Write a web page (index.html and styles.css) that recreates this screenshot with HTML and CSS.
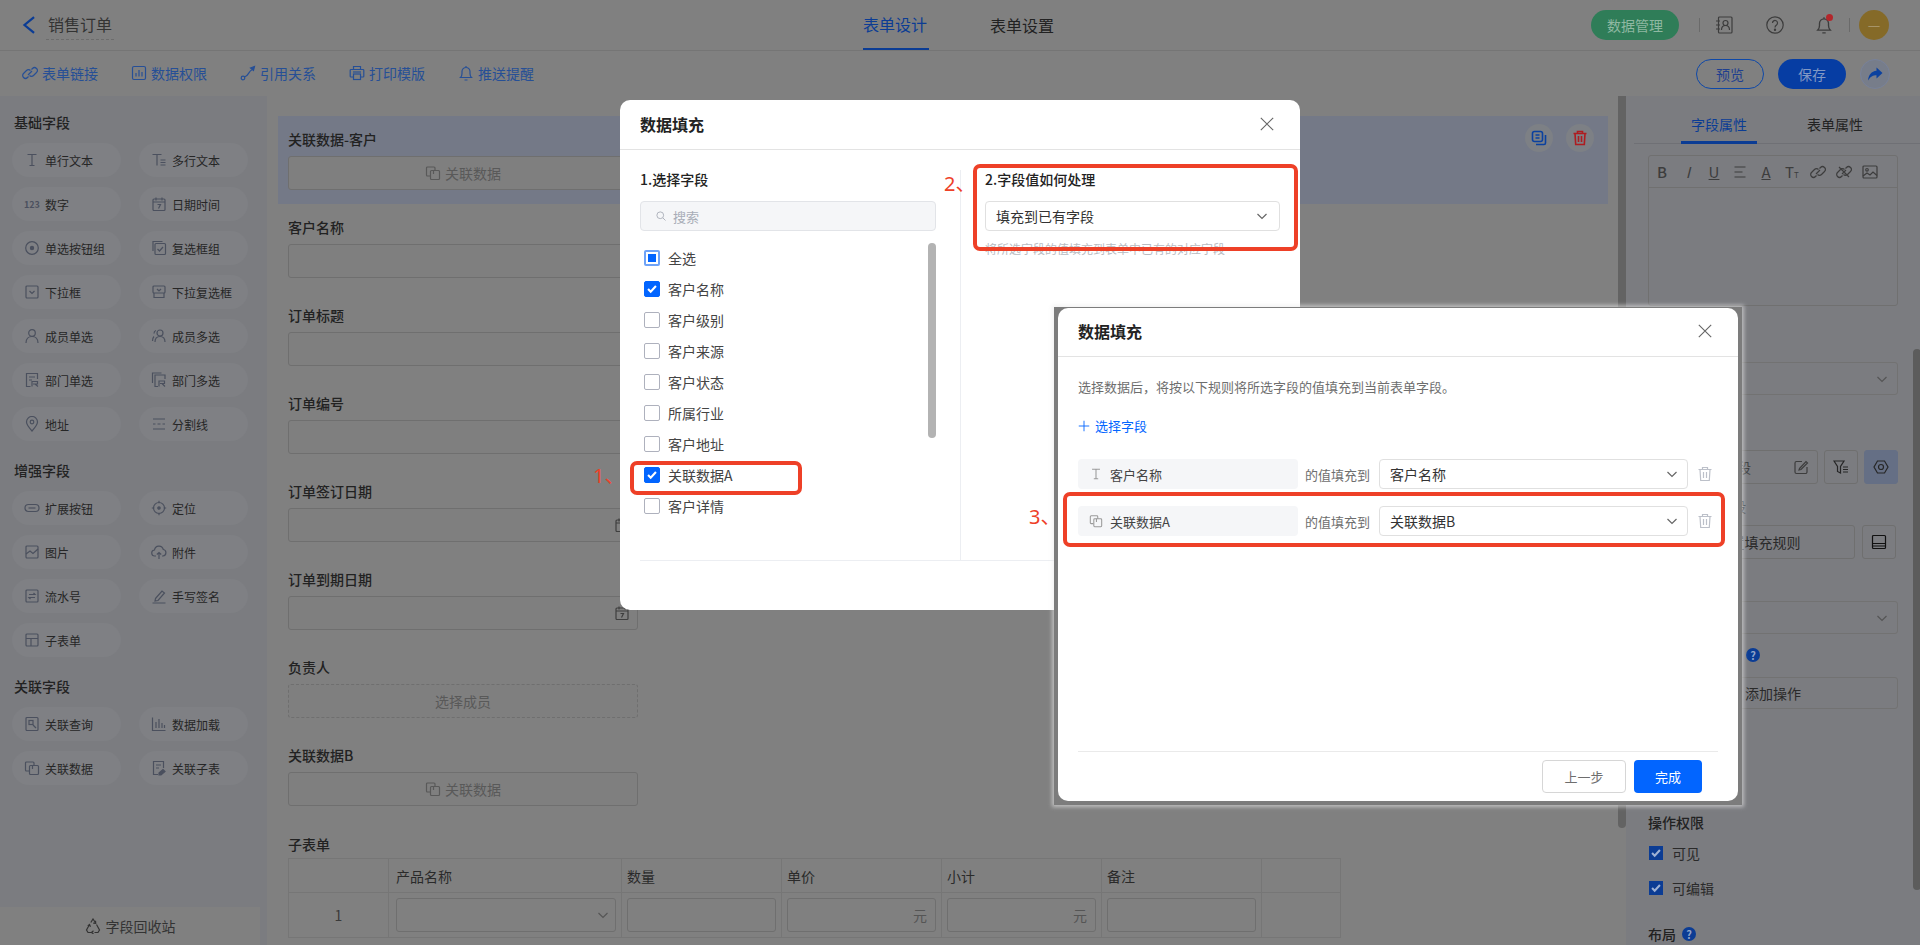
FILE: index.html
```html
<!DOCTYPE html>
<html lang="zh-CN">
<head>
  <meta charset="UTF-8" />
  <meta name="viewport" content="width=device-width, initial-scale=1.0" />
  <title>销售订单 - 表单设计</title>
  <link rel="stylesheet" href="styles.css">
</head>
<body>
  <svg class="sprite" xmlns="http://www.w3.org/2000/svg">
    <symbol id="i-chev" viewBox="0 0 16 16"><path d="M3.5 6l4.5 4.5L12.500 6"/></symbol>
    <symbol id="i-close" viewBox="0 0 16 16"><path d="M2.500 2.500l11 11M13.500 2.500l-11 11"/></symbol>
    <symbol id="i-text" viewBox="0 0 16 16"><path d="M3.500 2.500h9M8 2.500v11M5.500 13.500h5"/></symbol>
    <symbol id="i-mtext" viewBox="0 0 16 16"><path d="M1.500 2.500h9M6 2.500v11M9.500 8h5M9.500 10.500h5M9.500 13h5"/></symbol>
    <symbol id="i-date" viewBox="0 0 16 16"><rect x="2" y="3" width="12" height="11.500" rx="1"/><path d="M2 6h12M5 1.500v3M11 1.500v3M6.500 8.500h3L7.500 12.500"/></symbol>
    <symbol id="i-radio" viewBox="0 0 16 16"><circle cx="8" cy="8" r="6.300"/><circle cx="8" cy="8" r="1.600" class="solid"/></symbol>
    <symbol id="i-checks" viewBox="0 0 16 16"><path d="M2 11V1.500h9.500"/><rect x="4" y="3.500" width="10.500" height="11" rx="1"/><path d="M6.500 9l2 2 3.500-4"/></symbol>
    <symbol id="i-drop" viewBox="0 0 16 16"><rect x="2" y="2" width="12" height="12" rx="1"/><path d="M5.500 7l2.500 2.500L10.500 7"/></symbol>
    <symbol id="i-mdrop" viewBox="0 0 16 16"><rect x="2" y="2" width="12" height="7" rx="1"/><path d="M3 9v4.500h10V9M6 5l2 2 2-2"/></symbol>
    <symbol id="i-user" viewBox="0 0 16 16"><circle cx="8" cy="5" r="3.300"/><path d="M2 15c0-4 2.500-6.500 6-6.500s6 2.500 6 6.500"/></symbol>
    <symbol id="i-users" viewBox="0 0 16 16"><circle cx="9" cy="5" r="3"/><path d="M4 14c0-3.500 2-5.500 5-5.500s5 2 5 5.500M5 2.500C3.500 3 3 4 3 5.500M1.500 13c0-2 .5-3.500 1.500-4.500"/></symbol>
    <symbol id="i-dept" viewBox="0 0 16 16"><path d="M13.500 7V1.500h-11v13h4M5 5h6M5 8h3"/><path d="M8 14.500V9.500h5.500v2.500H9M11 12l3 2.500"/></symbol>
    <symbol id="i-depts" viewBox="0 0 16 16"><path d="M1.500 11V1h9"/><path d="M14 7V3H4v11.500h3M8 14.500V9h5.500v2.500H9M11 11.500l3 3"/></symbol>
    <symbol id="i-pin" viewBox="0 0 16 16"><path d="M8 15C4.500 11 2.500 8.500 2.500 6a5.500 5.500 0 0 1 11 0c0 2.500-2 5-5.500 9z"/><circle cx="8" cy="6" r="1.800"/></symbol>
    <symbol id="i-split" viewBox="0 0 16 16"><path d="M2 3h12M2 13h12M2 8h2.500M6.500 8h3M11.500 8H14"/></symbol>
    <symbol id="i-ext" viewBox="0 0 16 16"><rect x="1" y="4.500" width="14" height="7" rx="3.500"/><path d="M4.500 8h7"/></symbol>
    <symbol id="i-target" viewBox="0 0 16 16"><circle cx="8" cy="8" r="5.500"/><circle cx="8" cy="8" r="1.200" class="solid"/><path d="M8 .8v2.500M8 12.700v2.500M.8 8h2.500M12.700 8h2.500"/></symbol>
    <symbol id="i-pic" viewBox="0 0 16 16"><rect x="2" y="2" width="12" height="12" rx="1"/><path d="M2 10l4-3 3 2.500L14 5"/></symbol>
    <symbol id="i-cloud" viewBox="0 0 16 16"><path d="M5 12H4a3 3 0 0 1-.5-6 4.500 4.500 0 0 1 8.800-.5A3.300 3.300 0 0 1 12 12h-1M8 15V8.500M5.800 10.500L8 8.500l2.200 2"/></symbol>
    <symbol id="i-serial" viewBox="0 0 16 16"><rect x="2" y="2" width="12" height="12" rx="1"/><path d="M5 6.500h6L9.500 5M11 9.500H5L6.500 11"/></symbol>
    <symbol id="i-pen" viewBox="0 0 16 16"><path d="M4.500 10.500L11 3l2.500 2L7 12.500l-3 .5zM1.500 15h13"/></symbol>
    <symbol id="i-sub" viewBox="0 0 16 16"><rect x="2" y="2" width="12" height="12" rx="1"/><path d="M2 6.500h12M7 6.500V14"/></symbol>
    <symbol id="i-query" viewBox="0 0 16 16"><rect x="2" y="1.500" width="12" height="13" rx="1"/><rect x="5" y="4.500" width="4" height="4"/><path d="M9 9l3 3"/></symbol>
    <symbol id="i-bars" viewBox="0 0 16 16"><path d="M1.500 1.500v13h13M5 12V6M8 12V3M11 12V7M13.500 12V9"/></symbol>
    <symbol id="i-link" viewBox="0 0 16 16"><path d="M5 11H2.500a1 1 0 0 1-1-1V3a1 1 0 0 1 1-1H9a1 1 0 0 1 1 1v2.500"/><rect x="5.500" y="5.500" width="9" height="9" rx="1"/><path d="M8.500 5.500V9"/></symbol>
    <symbol id="i-rel" viewBox="0 0 16 16"><path d="M7 14.500H2.500v-13h10V8M5 5h5M5 8h3"/><path d="M8 13l4-3.500 2 2-4 3.500H8z" class="solid"/></symbol>
    <symbol id="i-chain" viewBox="0 0 16 16"><path d="M6.500 11.500l-1 1a2.800 2.800 0 0 1-4-4l3-3a2.800 2.800 0 0 1 4 0M9.500 4.500l1-1a2.800 2.800 0 0 1 4 4l-3 3a2.800 2.800 0 0 1-4 0M6 10l4-4"/></symbol>
    <symbol id="i-perm" viewBox="0 0 16 16"><rect x="1.500" y="1.500" width="13" height="13" rx="1.500"/><path d="M5 11.500V8M8 11.500V5M11 11.500V7"/></symbol>
    <symbol id="i-ref" viewBox="0 0 16 16"><circle cx="3" cy="13" r="1.800"/><path d="M4.500 12C9 11 8 6 12.500 4.500"/><path d="M10.500 3l4-1.500-1 4z" class="solid"/></symbol>
    <symbol id="i-print" viewBox="0 0 16 16"><path d="M4.500 4.500V1.500h7v3M4.500 12H2a.8.800 0 0 1-.8-.8V5.300a.8.800 0 0 1 .8-.8h12a.8.800 0 0 1 .8.800v5.900a.8.800 0 0 1-.8.800h-2.500"/><rect x="4.500" y="9" width="7" height="5.500"/><path d="M4 7h8"/></symbol>
    <symbol id="i-bell" viewBox="0 0 16 16"><path d="M2.500 12.500h11c-1-1-1.500-2-1.500-4V6.500a4 4 0 0 0-8 0v2c0 2-.5 3-1.500 4zM6.500 15h3M8 1v1.500"/></symbol>
    <symbol id="i-book" viewBox="0 0 18 18"><rect x="3.500" y="1" width="13.500" height="16" rx="1"/><circle cx="10.500" cy="7" r="2.500"/><path d="M6.500 14c0-3 1.500-4.500 4-4.500s4 1.500 4 4.500M1 5h4M1 9h4M1 13h4"/></symbol>
    <symbol id="i-help" viewBox="0 0 18 18"><circle cx="9" cy="9" r="8.200"/><path d="M6.500 7a2.500 2.500 0 1 1 4 2c-1 .7-1.500 1.200-1.500 2.500"/><circle cx="9" cy="13.800" r=".6" class="solid"/></symbol>
    <symbol id="i-share" viewBox="0 0 16 16"><path class="fill" d="M9.500 1.500L15.500 7l-6 5.500V9.200C6 9.200 3.500 10.500 1 14.500 1.500 9 4.500 5.200 9.500 4.800z"/></symbol>
    <symbol id="i-copy" viewBox="0 0 16 16"><rect x="1.500" y="1.500" width="10" height="10" rx="2"/><path d="M14.500 5v8a1.500 1.500 0 0 1-1.500 1.500H5M4.500 5h4M4.500 8h4"/></symbol>
    <symbol id="i-trash" viewBox="0 0 16 16"><path d="M1.500 3.500h13M5.500 3.500V1.500h5v2M3 3.500l.7 11h8.600l.7-11M6.500 6v6M9.500 6v6"/></symbol>
    <symbol id="i-recycle" viewBox="0 0 16 16"><path d="M5.800 4.500L8 1l2.300 3.500M11.500 6.500l3 5.500-1.500 2.500H9.500M6.500 14.500H3L1.500 12l3-5.500M10.500 2.800l.2 2.600-2.500-.3M8.500 12.800l-2 1.700 2 1.300M2.800 8l1.700-1.500 1 2.200"/></symbol>
    <symbol id="i-search" viewBox="0 0 16 16"><circle cx="7" cy="7" r="4.500"/><path d="M10.500 10.500l3.500 3.500"/></symbol>
    <symbol id="i-plus" viewBox="0 0 16 16"><path d="M8 1v14M1 8h14"/></symbol>
    <symbol id="i-check" viewBox="0 0 16 16"><path class="tick" d="M3.500 8l3 3 6-6.500"/></symbol>
    <symbol id="i-align" viewBox="0 0 16 16"><path d="M2.500 3h11M2.500 8h8M2.500 13h11"/></symbol>
    <symbol id="i-unlink" viewBox="0 0 16 16"><path d="M6.500 11.500l-1 1a2.800 2.800 0 0 1-4-4l3-3a2.800 2.800 0 0 1 4 0M9.500 4.500l1-1a2.800 2.800 0 0 1 4 4l-3 3a2.800 2.800 0 0 1-4 0M6 10l4-4M3 3l10 10"/></symbol>
    <symbol id="i-photo" viewBox="0 0 16 16"><rect x="1" y="2" width="14" height="12" rx="1"/><circle cx="5" cy="5.800" r="1.300"/><path d="M1 12l4-3 3 2 3-3 4 3.500"/></symbol>
    <symbol id="i-edit" viewBox="0 0 16 16"><path d="M14 8v5a1.500 1.500 0 0 1-1.500 1.500h-9A1.500 1.500 0 0 1 2 13V4a1.500 1.500 0 0 1 1.500-1.500H9"/><path d="M6.500 9.500L13 2.500l1.500 1.500-6.500 6.500-2 .5z"/></symbol>
    <symbol id="i-filter" viewBox="0 0 16 16"><path d="M1 2h10L7.500 7.500V14l-3-1.500v-5zM10 8h5M10 10.500h5M10 13h5"/></symbol>
    <symbol id="i-hex" viewBox="0 0 16 16"><path d="M4.500 2h7L15 8l-3.500 6h-7L1 8z"/><circle cx="8" cy="8" r="2.500"/></symbol>
    <symbol id="i-panel" viewBox="0 0 16 16"><rect x="1.500" y="1.500" width="13" height="13" rx="1"/><path d="M1.500 9.500h13M1.500 12h13"/></symbol>
  </svg>

  <header class="topbar">
    <div class="top-left">
      <svg class="back" viewBox="0 0 12 16"><path d="M10.500 1L2 8l8.500 7"/></svg>
      <span class="form-name">销售订单</span>
    </div>
    <nav class="top-tabs">
      <span class="top-tab on">表单设计</span>
      <span class="top-tab">表单设置</span>
    </nav>
    <div class="top-right">
      <span class="pill-green">数据管理</span>
      <i class="vline"></i>
      <svg class="ic top-ic"><use href="#i-book"/></svg>
      <svg class="ic top-ic"><use href="#i-help"/></svg>
      <span class="bell"><svg class="ic top-ic"><use href="#i-bell"/></svg><i class="dot"></i></span>
      <i class="vline"></i>
      <span class="avatar">—</span>
    </div>
  </header>

  <div class="toolbar">
    <a class="tool"><svg class="ic"><use href="#i-chain"/></svg>表单链接</a>
    <a class="tool"><svg class="ic"><use href="#i-perm"/></svg>数据权限</a>
    <a class="tool"><svg class="ic"><use href="#i-ref"/></svg>引用关系</a>
    <a class="tool"><svg class="ic"><use href="#i-print"/></svg>打印模版</a>
    <a class="tool"><svg class="ic"><use href="#i-bell"/></svg>推送提醒</a>
    <div class="tool-actions">
      <button class="btn-line">预览</button>
      <button class="btn-solid">保存</button>
      <span class="share"><svg class="ic"><use href="#i-share"/></svg></span>
    </div>
  </div>

  <main class="main">
    <aside class="sidebar">
      <h4 class="side-title">基础字段</h4>
      <div class="chips">
        <div class="chip"><svg class="ic"><use href="#i-text"/></svg>单行文本</div>
        <div class="chip"><svg class="ic"><use href="#i-mtext"/></svg>多行文本</div>
        <div class="chip"><span class="num-ic">123</span>数字</div>
        <div class="chip"><svg class="ic"><use href="#i-date"/></svg>日期时间</div>
        <div class="chip"><svg class="ic"><use href="#i-radio"/></svg>单选按钮组</div>
        <div class="chip"><svg class="ic"><use href="#i-checks"/></svg>复选框组</div>
        <div class="chip"><svg class="ic"><use href="#i-drop"/></svg>下拉框</div>
        <div class="chip"><svg class="ic"><use href="#i-mdrop"/></svg>下拉复选框</div>
        <div class="chip"><svg class="ic"><use href="#i-user"/></svg>成员单选</div>
        <div class="chip"><svg class="ic"><use href="#i-users"/></svg>成员多选</div>
        <div class="chip"><svg class="ic"><use href="#i-dept"/></svg>部门单选</div>
        <div class="chip"><svg class="ic"><use href="#i-depts"/></svg>部门多选</div>
        <div class="chip"><svg class="ic"><use href="#i-pin"/></svg>地址</div>
        <div class="chip"><svg class="ic"><use href="#i-split"/></svg>分割线</div>
      </div>
      <h4 class="side-title">增强字段</h4>
      <div class="chips">
        <div class="chip"><svg class="ic"><use href="#i-ext"/></svg>扩展按钮</div>
        <div class="chip"><svg class="ic"><use href="#i-target"/></svg>定位</div>
        <div class="chip"><svg class="ic"><use href="#i-pic"/></svg>图片</div>
        <div class="chip"><svg class="ic"><use href="#i-cloud"/></svg>附件</div>
        <div class="chip"><svg class="ic"><use href="#i-serial"/></svg>流水号</div>
        <div class="chip"><svg class="ic"><use href="#i-pen"/></svg>手写签名</div>
        <div class="chip"><svg class="ic"><use href="#i-sub"/></svg>子表单</div>
      </div>
      <h4 class="side-title">关联字段</h4>
      <div class="chips">
        <div class="chip"><svg class="ic"><use href="#i-query"/></svg>关联查询</div>
        <div class="chip"><svg class="ic"><use href="#i-bars"/></svg>数据加载</div>
        <div class="chip"><svg class="ic"><use href="#i-link"/></svg>关联数据</div>
        <div class="chip"><svg class="ic"><use href="#i-rel"/></svg>关联子表</div>
      </div>
      <div class="recycle"><svg class="ic"><use href="#i-recycle"/></svg>字段回收站</div>
    </aside>

    <section class="canvas">
      <div class="field field-on">
        <label class="f-label">关联数据-客户</label>
        <div class="f-box f-center"><svg class="ic"><use href="#i-link"/></svg>关联数据</div>
        <div class="field-ops">
          <span class="op op-copy"><svg class="ic"><use href="#i-copy"/></svg></span>
          <span class="op op-del"><svg class="ic"><use href="#i-trash"/></svg></span>
        </div>
      </div>
      <div class="field"><label class="f-label">客户名称</label><div class="f-box"></div></div>
      <div class="field"><label class="f-label">订单标题</label><div class="f-box"></div></div>
      <div class="field"><label class="f-label">订单编号</label><div class="f-box"></div></div>
      <div class="field"><label class="f-label">订单签订日期</label><div class="f-box f-date"><svg class="ic"><use href="#i-date"/></svg></div></div>
      <div class="field"><label class="f-label">订单到期日期</label><div class="f-box f-date"><svg class="ic"><use href="#i-date"/></svg></div></div>
      <div class="field"><label class="f-label">负责人</label><div class="f-box f-center f-dash">选择成员</div></div>
      <div class="field"><label class="f-label">关联数据B</label><div class="f-box f-center"><svg class="ic"><use href="#i-link"/></svg>关联数据</div></div>
      <div class="subform">
        <label class="f-label">子表单</label>
        <table class="sub-table">
          <colgroup>
            <col class="c-no"><col class="c-name"><col class="c-cell"><col class="c-cell"><col class="c-cell"><col class="c-cell"><col class="c-end">
          </colgroup>
          <tr class="sub-head"><th></th><th>产品名称</th><th>数量</th><th>单价</th><th>小计</th><th>备注</th><th></th></tr>
          <tr>
            <td class="no">1</td>
            <td><div class="cell-box cell-sel"><svg class="ic"><use href="#i-chev"/></svg></div></td>
            <td><div class="cell-box"></div></td>
            <td><div class="cell-box cell-unit">元</div></td>
            <td><div class="cell-box cell-unit">元</div></td>
            <td><div class="cell-box"></div></td>
            <td></td>
          </tr>
        </table>
      </div>
    </section>

    <div class="mid-scroll"><i></i></div>

    <aside class="panel">
      <div class="panel-tabs">
        <span class="panel-tab on">字段属性</span>
        <span class="panel-tab">表单属性</span>
      </div>
      <div class="panel-body">
        <div class="editor">
          <div class="editor-bar">
            <span class="eb"><b>B</b></span>
            <span class="eb"><i>I</i></span>
            <span class="eb"><u>U</u></span>
            <span class="eb"><svg class="ic"><use href="#i-align"/></svg></span>
            <span class="eb"><u>A</u></span>
            <span class="eb"><span>T<small>T</small></span></span>
            <span class="eb"><svg class="ic"><use href="#i-chain"/></svg></span>
            <span class="eb"><svg class="ic"><use href="#i-unlink"/></svg></span>
            <span class="eb"><svg class="ic"><use href="#i-photo"/></svg></span>
          </div>
        </div>

        <div class="p-select p-select-a"><svg class="ic"><use href="#i-chev"/></svg></div>

        <div class="p-row p-row-a">
          <div class="p-input p-input-a">选择填充字段<svg class="ic"><use href="#i-edit"/></svg></div>
          <span class="p-btn"><svg class="ic"><use href="#i-filter"/></svg></span>
          <span class="p-btn p-btn-on"><svg class="ic"><use href="#i-hex"/></svg></span>
        </div>

        <div class="p-label p-label-a">关联填充的字段</div>
        <div class="p-row p-row-b">
          <div class="p-input p-input-b"><svg class="ic"><use href="#i-plus"/></svg>配置填充规则</div>
          <span class="p-btn p-btn-dark"><svg class="ic"><use href="#i-panel"/></svg></span>
        </div>

        <div class="p-select p-select-b"><svg class="ic"><use href="#i-chev"/></svg></div>

        <div class="p-label p-label-b">字段操作按钮<span class="q">?</span></div>
        <div class="p-add"><svg class="ic"><use href="#i-plus"/></svg>添加操作</div>

        <h4 class="p-title p-title-a">操作权限</h4>
        <div class="p-check p-check-a"><span class="p-box"><svg class="ic"><use href="#i-check"/></svg></span>可见</div>
        <div class="p-check p-check-b"><span class="p-box"><svg class="ic"><use href="#i-check"/></svg></span>可编辑</div>
        <h4 class="p-title p-title-b">布局<span class="q">?</span></h4>
      </div>
      <i class="panel-scroll"></i>
    </aside>
  </main>

  <!-- 第一张弹窗：选择字段 -->
  <div class="dialog dialog-one">
    <div class="dlg-head"><span>数据填充</span><svg class="ic"><use href="#i-close"/></svg></div>
    <div class="dlg-cols">
      <div class="col-left">
        <h5 class="col-title">1.选择字段</h5>
        <div class="search"><svg class="ic"><use href="#i-search"/></svg>搜索</div>
        <ul class="pick-list">
          <li><span class="cb cb-part"></span>全选</li>
          <li><span class="cb cb-on"><svg class="ic"><use href="#i-check"/></svg></span>客户名称</li>
          <li><span class="cb"></span>客户级别</li>
          <li><span class="cb"></span>客户来源</li>
          <li><span class="cb"></span>客户状态</li>
          <li><span class="cb"></span>所属行业</li>
          <li><span class="cb"></span>客户地址</li>
          <li><span class="cb cb-on"><svg class="ic"><use href="#i-check"/></svg></span>关联数据A</li>
          <li><span class="cb"></span>客户详情</li>
          <i class="pick-thumb"></i>
        </ul>
      </div>
      <div class="col-right">
        <h5 class="col-title">2.字段值如何处理</h5>
        <div class="dlg-select dlg-select-wide">填充到已有字段<svg class="ic"><use href="#i-chev"/></svg></div>
        <p class="hint">将所选字段的值填充到表单中已有的对应字段</p>
      </div>
    </div>
  </div>

  <!-- 第二张弹窗：贴上去的截图，四周带浅色描边 -->
  <div class="shot">
    <div class="dialog dialog-two">
      <div class="dlg-head"><span>数据填充</span><svg class="ic"><use href="#i-close"/></svg></div>
      <div class="two-body">
        <p class="note">选择数据后，将按以下规则将所选字段的值填充到当前表单字段。</p>
        <a class="add-link"><svg class="ic"><use href="#i-plus"/></svg>选择字段</a>
        <div class="map-row">
          <div class="map-name"><svg class="ic"><use href="#i-text"/></svg>客户名称</div>
          <span class="map-to">的值填充到</span>
          <div class="dlg-select map-sel">客户名称<svg class="ic"><use href="#i-chev"/></svg></div>
          <svg class="ic map-del"><use href="#i-trash"/></svg>
        </div>
        <div class="map-row">
          <div class="map-name"><svg class="ic"><use href="#i-link"/></svg>关联数据A</div>
          <span class="map-to">的值填充到</span>
          <div class="dlg-select map-sel">关联数据B<svg class="ic"><use href="#i-chev"/></svg></div>
          <svg class="ic map-del"><use href="#i-trash"/></svg>
        </div>
        <div class="two-foot">
          <button class="foot-prev">上一步</button>
          <button class="foot-done">完成</button>
        </div>
      </div>
    </div>
  </div>

  <!-- 红色标注 -->
  <i class="mark-box mark-box-1"></i>
  <i class="mark-box mark-box-2"></i>
  <i class="mark-box mark-box-3"></i>
  <span class="mark-no mark-no-1">1、</span>
  <span class="mark-no mark-no-2">2、</span>
  <span class="mark-no mark-no-3">3、</span>
</body>
</html>
```

FILE: styles.css
```css
* {
  box-sizing: border-box;
}
body {
  margin: 0;
  width: 1920px;
  height: 945px;
  overflow: hidden;
  position: relative;
  background-color: #808080;
  color: #1f1f1f;
  font-family: "Noto Sans CJK SC", "Noto Sans", sans-serif;
  font-size: 14px;
}
h4, h5, p, ul {
  margin: 0;
  padding: 0;
}
.sprite {
  display: none;
}
.ic {
  width: 16px;
  height: 16px;
  flex: none;
  fill: none;
  stroke: currentColor;
  stroke-width: 1.200;
}
symbol .solid, .solid {
  fill: currentColor;
}
.fill {
  fill: currentColor;
  stroke: none;
}
.tick {
  stroke: #fff;
  stroke-width: 2.400;
}

/* top bar */
.topbar {
  height: 51px;
  display: flex;
  align-items: center;
  border-bottom: 1px solid #757575;
}
.top-left {
  flex: 0 0 863px;
  display: flex;
  align-items: center;
  padding-left: 22px;
}
.back {
  width: 14px;
  height: 18px;
  fill: none;
  stroke: #0b3c94;
  stroke-width: 2;
}
.form-name {
  margin-left: 10px;
  padding: 0 2px 2px;
  font-size: 16px;
  line-height: 26px;
  color: #333;
  border-bottom: 1px dashed #6c6c6c;
}
.top-tabs {
  display: flex;
  gap: 61px;
  height: 50px;
}
.top-tab {
  font-size: 16px;
  line-height: 50px;
  height: 50px;
  width: 66px;
  color: #222;
  white-space: nowrap;
}
.top-tab.on {
  color: #0b3c94;
  border-bottom: 2px solid #0b3c94;
  line-height: 48px;
}
.top-right {
  margin-left: auto;
  padding-right: 31px;
  display: flex;
  align-items: center;
}
.pill-green {
  width: 88px;
  height: 30px;
  line-height: 30px;
  text-align: center;
  border-radius: 15px;
  background-color: #2f7d58;
  color: #8fb8a2;
}
.vline {
  width: 1px;
  height: 14px;
  background-color: #6a6a6a;
  margin: 0 10px 0 20px;
}
.top-ic {
  width: 18px;
  height: 18px;
  color: #3c3c3c;
  margin: 0 0 0 5px;
}
.top-ic + .top-ic {
  margin-left: 33px;
}
.bell {
  position: relative;
  margin-left: 31px;
  display: flex;
}
.bell .top-ic {
  margin: 0;
}
.dot {
  position: absolute;
  right: 0;
  top: -2px;
  width: 7px;
  height: 7px;
  border-radius: 50%;
  background-color: #b3262b;
}
.bell + .vline {
  margin: 0 9px 0 16px;
}
.avatar {
  width: 30px;
  height: 30px;
  line-height: 28px;
  text-align: center;
  border-radius: 50%;
  background-color: #856a28;
  color: #a79468;
}

/* second bar */
.toolbar {
  height: 45px;
  display: flex;
  align-items: center;
  padding: 0 30px 0 22px;
  gap: 33px;
}
.tool {
  display: flex;
  align-items: center;
  gap: 4px;
  height: 22px;
  line-height: 20px;
  padding-bottom: 2px;
  color: #264f96;
  white-space: nowrap;
}
.tool .ic {
  width: 16px;
  height: 16px;
}
.tool-actions {
  margin-left: auto;
  display: flex;
  align-items: center;
  gap: 14px;
}
.btn-line, .btn-solid {
  width: 68px;
  height: 30px;
  border-radius: 15px;
  font: inherit;
  padding: 0;
}
.btn-line {
  background: transparent;
  border: 1px solid #0e48a8;
  color: #1f3f8f;
}
.btn-solid {
  border: none;
  background-color: #063da3;
  color: #8298c4;
}
.share {
  width: 30px;
  height: 30px;
  display: flex;
  align-items: center;
  justify-content: center;
  border-radius: 50%;
  background-color: #777d8a;
  border: 1px solid #78829a;
  color: #0b419f;
}

/* layout */
.main {
  display: flex;
  height: 849px;
}
.sidebar {
  flex: 0 0 267px;
  display: flex;
  flex-direction: column;
  padding: 17px 7px 0 12px;
  background-color: #7b7c80;
}
.side-title {
  font-size: 14px;
  font-weight: 500;
  line-height: 18px;
  padding: 0 0 2px 2px;
  margin-bottom: 10px;
  color: #222;
}
.chips {
  display: grid;
  grid-template-columns: 109px 109px;
  column-gap: 18px;
  row-gap: 10px;
  margin-bottom: 20px;
}
.chip {
  height: 34px;
  display: flex;
  align-items: center;
  gap: 5px;
  padding-left: 12px;
  border-radius: 17px;
  background-color: #7f8084;
  font-size: 12px;
  color: #262626;
  white-space: nowrap;
}
.chip .ic {
  color: #4b505e;
}
.num-ic {
  width: 16px;
  font-size: 9px;
  font-weight: 700;
  color: #4b505e;
}
.recycle {
  margin: auto 0 0 -12px;
  width: 260px;
  height: 38px;
  flex: none;
  display: flex;
  align-items: center;
  justify-content: center;
  gap: 5px;
  background-color: #808080;
  color: #333;
}

/* form canvas */
.canvas {
  flex: 0 0 1351px;
  padding-top: 20px;
}
.field {
  position: relative;
  height: 88px;
  padding: 14px 21px;
}
.field-on {
  margin: 0 10px 0 11px;
  padding: 14px 10px;
  background-color: #747987;
}
.f-label {
  display: block;
  height: 20px;
  line-height: 18px;
  font-weight: 500;
  color: #222;
  white-space: nowrap;
}
.f-box {
  width: 350px;
  height: 34px;
  margin-top: 6px;
  border: 1px solid #6f6f6f;
  border-radius: 3px;
  background-color: #7f7f7f;
}
.f-center {
  display: flex;
  align-items: center;
  justify-content: center;
  gap: 4px;
  color: #595959;
}
.f-dash {
  border-style: dashed;
}
.f-date {
  display: flex;
  align-items: center;
  justify-content: flex-end;
  padding-right: 7px;
  color: #3f3f3f;
}
.field-ops {
  position: absolute;
  top: 8px;
  right: 14px;
  display: flex;
  gap: 13px;
}
.op {
  width: 28px;
  height: 28px;
  display: flex;
  align-items: center;
  justify-content: center;
  border-radius: 50%;
  background-color: #7d8085;
}
.op-copy {
  color: #0b419f;
}
.op-del {
  color: #ae1c20;
}
.op .ic {
  stroke-width: 1.600;
}
.subform {
  padding: 15px 21px 0;
}
.subform .f-label {
  margin-bottom: 3px;
}
.sub-table {
  width: 1052px;
  table-layout: fixed;
  border-collapse: collapse;
}
.sub-table th, .sub-table td {
  border: 1px solid #767676;
  padding: 0 5px;
  font-weight: 400;
  text-align: left;
  color: #2a2a2a;
}
.sub-table th:nth-child(2), .sub-table td:nth-child(2) {
  padding-left: 7px;
}
.sub-head {
  height: 34px;
}
.c-no {
  width: 100px;
}
.c-name {
  width: 233px;
}
.c-cell {
  width: 160px;
}
.c-end {
  width: 79px;
}
.sub-table td.no {
  text-align: center;
  color: #3a3a3a;
}
.sub-table td {
  height: 45px;
}
.cell-box {
  height: 34px;
  line-height: 32px;
  border: 1px solid #6f6f6f;
  border-radius: 3px;
  padding: 0 8px;
  color: #555;
}
.cell-sel {
  display: flex;
  align-items: center;
  justify-content: flex-end;
  padding-right: 4px;
}
.cell-unit {
  text-align: right;
}
.mid-scroll {
  flex: 0 0 8px;
}
.mid-scroll i {
  display: block;
  width: 8px;
  height: 732px;
  border-radius: 0 0 4px 4px;
  background-color: #636363;
}

/* right panel */
.panel {
  position: relative;
  flex: 1;
  background-color: #7b7c80;
}
.panel-tabs {
  height: 48px;
  margin-left: 8px;
  padding-left: 47px;
  display: flex;
  gap: 40px;
  border-bottom: 1px solid #6f7075;
}
.panel-tab {
  width: 76px;
  height: 48px;
  padding-top: 18px;
  line-height: 20px;
  text-align: center;
  color: #222;
}
.panel-tab.on {
  color: #0b3c94;
  border-bottom: 3px solid #0b3c94;
}
.panel-body {
  padding: 11px 23px 0 22px;
}
.editor {
  height: 151px;
  border: 1px solid #707070;
  border-radius: 3px;
}
.editor-bar {
  height: 32px;
  display: flex;
  align-items: center;
  border-bottom: 1px solid #707070;
  color: #3d3d3d;
}
.eb {
  width: 26px;
  text-align: center;
  display: flex;
  justify-content: center;
  font-size: 15px;
}
.eb small {
  font-size: 8px;
}
.eb b {
  font-weight: 500;
}
.p-select {
  height: 33px;
  border: 1px solid #727272;
  border-radius: 3px;
  display: flex;
  align-items: center;
  justify-content: flex-end;
  padding-right: 7px;
  color: #555;
}
.p-select-a {
  margin-top: 56px;
}
.p-select-b {
  margin-top: 42px;
}
.p-row {
  display: flex;
  height: 34px;
}
.p-row-a {
  margin-top: 55px;
  gap: 6px;
}
.p-row-b {
  margin-top: 9px;
  gap: 7px;
}
.p-input {
  height: 34px;
  border: 1px solid #6f6f6f;
  border-radius: 3px;
  display: flex;
  align-items: center;
  white-space: nowrap;
  color: #2a2a2a;
}
.p-input-a {
  width: 170px;
  padding: 0 8px 0 18px;
  justify-content: space-between;
  color: #3d3d3d;
}
.p-input-b {
  width: 207px;
  justify-content: center;
  gap: 4px;
}
.p-input-b .ic, .p-add .ic {
  width: 10px;
  height: 10px;
}
.p-btn {
  width: 34px;
  height: 34px;
  flex: none;
  display: flex;
  align-items: center;
  justify-content: center;
  border: 1px solid #6f6f6f;
  border-radius: 3px;
  color: #262626;
}
.p-btn-on {
  background-color: #656f85;
  border-color: #656f85;
}
.p-btn-dark {
  color: #111;
}
.p-label {
  line-height: 20px;
  color: #2a2a2a;
  white-space: nowrap;
}
.p-label-a {
  margin-top: 12px;
}
.p-label-b {
  margin-top: 11px;
  display: flex;
  align-items: center;
}
.q {
  width: 14px;
  height: 14px;
  margin-left: 6px;
  border-radius: 50%;
  background-color: #0b3c94;
  color: #8fa3c9;
  font-size: 11px;
  font-weight: 700;
  line-height: 14px;
  text-align: center;
}
.p-label-b .q {
  margin-left: 14px;
}
.p-add {
  margin-top: 12px;
  height: 32px;
  padding-right: 14px;
  border: 1px solid #727272;
  border-radius: 3px;
  display: flex;
  align-items: center;
  justify-content: center;
  gap: 4px;
  color: #2a2a2a;
}
.p-title {
  display: flex;
  align-items: center;
  font-size: 14px;
  font-weight: 500;
  line-height: 18px;
  height: 20px;
  color: #222;
}
.p-title-a {
  margin-top: 103px;
}
.p-title-b {
  margin-top: 26px;
}
.p-check {
  display: flex;
  align-items: center;
  gap: 9px;
  line-height: 20px;
  padding-left: 1px;
  color: #2a2a2a;
}
.p-check-a {
  margin-top: 11px;
}
.p-check-b {
  margin-top: 15px;
}
.p-box {
  width: 14px;
  height: 14px;
  display: flex;
  background-color: #0b3c94;
}
.p-box .ic {
  width: 14px;
  height: 14px;
}
.p-box .tick, .p-box use {
  opacity: .6;
}
.panel-scroll {
  position: absolute;
  right: 0;
  top: 253px;
  width: 8px;
  height: 541px;
  border-radius: 4px;
  background-color: #5c5c5c;
}

/* dialogs */
.dialog {
  background-color: #fff;
  color: #333;
  border-radius: 10px;
}
.dialog-one {
  position: absolute;
  left: 620px;
  top: 100px;
  width: 680px;
  height: 510px;
  z-index: 2;
}
.dlg-head {
  height: 50px;
  padding: 0 24px 2px 20px;
  display: flex;
  align-items: center;
  justify-content: space-between;
  border-bottom: 1px solid #e3e3e3;
  font-size: 16px;
  font-weight: 700;
  color: #222;
}
.dlg-head .ic {
  color: #666;
  width: 18px;
  height: 18px;
  stroke-width: 1;
}
.dlg-cols {
  display: flex;
  height: 391px;
  margin: 20px 0 0 20px;
  border-bottom: 1px solid #eceef2;
}
.col-left {
  width: 321px;
  flex: none;
  border-right: 1px solid #eceef2;
}
.col-right {
  padding-left: 24px;
  width: 319px;
}
.col-title {
  font-size: 14px;
  font-weight: 500;
  line-height: 18px;
  height: 20px;
  color: #222;
}
.search {
  width: 296px;
  height: 30px;
  margin-top: 11px;
  padding-left: 14px;
  display: flex;
  align-items: center;
  gap: 6px;
  border: 1px solid #e2e4e8;
  border-radius: 4px;
  background-color: #f5f6f8;
  font-size: 13px;
  color: #a8adb7;
}
.search .ic {
  width: 12px;
  height: 12px;
}
.pick-list {
  position: relative;
  width: 296px;
  margin-top: 12px;
  list-style: none;
}
.pick-list li {
  height: 31px;
  padding: 0 0 1px 4px;
  display: flex;
  align-items: center;
  gap: 8px;
  font-size: 14px;
  color: #444;
}
.pick-thumb {
  position: absolute;
  right: 0;
  top: 0;
  width: 8px;
  height: 195px;
  border-radius: 4px;
  background-color: #b3b3b3;
}
.cb {
  width: 16px;
  height: 16px;
  display: flex;
  border: 1px solid #aeb1bd;
  border-radius: 2px;
}
.cb-on {
  background-color: #0265ff;
  border-color: #0265ff;
}
.cb-on .ic {
  width: 14px;
  height: 14px;
}
.cb-part {
  border-color: #6fa3f7;
  border-width: 2px;
  padding: 2px;
}
.cb-part::before {
  content: "";
  width: 8px;
  height: 8px;
  background-color: #0265ff;
}
.dlg-select {
  display: flex;
  align-items: center;
  justify-content: space-between;
  border: 1px solid #e0e0e0;
  border-radius: 4px;
  color: #333;
}
.dlg-select .ic {
  color: #666;
  width: 16px;
  height: 16px;
}
.dlg-select-wide {
  width: 295px;
  height: 30px;
  margin-top: 11px;
  padding: 0 9px 0 10px;
}
.hint {
  margin-top: 10px;
  line-height: 16px;
  font-size: 12px;
  color: #b9bcc2;
  white-space: nowrap;
}

/* pasted second dialog */
.shot {
  position: absolute;
  left: 1054px;
  top: 307px;
  width: 688px;
  height: 498px;
  padding: 1px 4px 4px;
  background-color: #7c7c7c;
  box-shadow: 0 0 4px 2px rgba(235, 235, 235, .6);
  z-index: 3;
}
.dialog-two {
  height: 493px;
  display: flex;
  flex-direction: column;
}
.dialog-two .dlg-head {
  height: 49px;
  flex: none;
}
.two-body {
  flex: 1;
  display: flex;
  flex-direction: column;
  padding: 0 20px 8px;
}
.note {
  margin-top: 20px;
  line-height: 20px;
  font-size: 13px;
  color: #6e6e6e;
  white-space: nowrap;
}
.add-link {
  margin-top: 19px;
  display: flex;
  align-items: center;
  gap: 5px;
  line-height: 20px;
  font-size: 13px;
  color: #0265ff;
}
.add-link .ic {
  width: 12px;
  height: 12px;
}
.map-row {
  margin-top: 23px;
  height: 30px;
  display: flex;
  align-items: center;
}
.map-row + .map-row {
  margin-top: 17px;
}
.map-name {
  width: 220px;
  height: 30px;
  padding-left: 11px;
  display: flex;
  align-items: center;
  gap: 7px;
  border-radius: 4px;
  background-color: #f5f6f8;
  font-size: 13px;
  color: #444;
}
.map-name .ic {
  width: 14px;
  height: 14px;
  color: #9a9a9a;
}
.map-to {
  width: 81px;
  padding-left: 7px;
  font-size: 13px;
  color: #6e6e6e;
  white-space: nowrap;
}
.map-sel {
  width: 309px;
  height: 30px;
  padding: 0 7px 0 10px;
}
.map-del {
  margin-left: 9px;
  color: #bcc0c9;
}
.two-foot {
  margin-top: auto;
  padding: 8px 16px 0 0;
  display: flex;
  justify-content: flex-end;
  gap: 8px;
  border-top: 1px solid #eaeaea;
}
.foot-prev, .foot-done {
  height: 33px;
  border-radius: 4px;
  font: inherit;
  font-size: 13px;
  padding: 0;
}
.foot-prev {
  width: 84px;
  border: 1px solid #d6d6d6;
  background-color: #fff;
  color: #6e6e6e;
}
.foot-done {
  width: 68px;
  border: none;
  background-color: #0265ff;
  color: #fff;
}

/* red annotations */
.mark-box {
  position: absolute;
  border: 4px solid #ee4027;
  border-radius: 7px;
  z-index: 5;
}
.mark-box-1 {
  left: 630px;
  top: 461px;
  width: 172px;
  height: 34px;
}
.mark-box-2 {
  left: 973px;
  top: 164px;
  width: 325px;
  height: 87px;
}
.mark-box-3 {
  left: 1063px;
  top: 492px;
  width: 662px;
  height: 55px;
}
.mark-no {
  position: absolute;
  font-family: "Noto Sans", "Noto Sans CJK SC", sans-serif;
  font-size: 20px;
  line-height: 24px;
  color: #ee4027;
  white-space: nowrap;
  z-index: 5;
}
.mark-no-1 {
  left: 593px;
  top: 464px;
}
.mark-no-2 {
  left: 944px;
  top: 172px;
}
.mark-no-3 {
  left: 1029px;
  top: 505px;
}
```
